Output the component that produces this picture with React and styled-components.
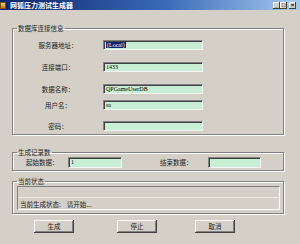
import React from 'react';
import styled, { createGlobalStyle } from 'styled-components';

const GlobalStyle = createGlobalStyle`
  html, body { margin: 0; padding: 0; background: #d4d0c8; }
  body { font-family: "Noto Sans CJK SC", "Liberation Sans", sans-serif; }
`;

const Window = styled.div`
  width: 300px;
  height: 244px;
  background: #d4d0c8;
  overflow: hidden;
  box-sizing: border-box;
`;

const TitleBar = styled.div`
  height: 10px;
  display: flex;
  align-items: center;
  background: linear-gradient(90deg, #0a246a 0%, #3a6ab8 55%, #a6caf0 100%);
  padding-right: 4px;
`;

const AppIcon = styled.div`
  width: 6px;
  height: 7px;
  margin-right: 4px;
  background: linear-gradient(180deg, #f7d36a, #c07a1c);
  border: 1px solid #7a5010;
  box-sizing: border-box;
`;

const Title = styled.span`
  flex: 1;
  color: #fff;
  font-weight: bold;
  font-size: 7px;
  line-height: 10px;
`;

const CaptionButton = styled.div`
  width: 7px;
  height: 7px;
  margin-left: ${(p) => p.$ml || 0}px;
  background: #d4d0c8;
  box-shadow: inset -1px -1px #404040, inset 1px 1px #fff;
  font-size: 6px;
  line-height: 7px;
  text-align: center;
  color: #000;
  font-family: "Liberation Sans", sans-serif;
  font-weight: bold;
`;

const Group = styled.fieldset`
  box-sizing: border-box;
  width: 272px;
  margin: ${(p) => p.$mt}px 0 0 12px;
  padding: 0 0 ${(p) => p.$pb}px 0;
  border: 1px solid #808080;
  box-shadow: 1px 1px 0 #fff, inset 1px 1px 0 #fff;
  min-inline-size: 0;
`;

const Legend = styled.legend`
  margin-left: 4px;
  padding: 0 1px;
  font-size: 6.5px;
  line-height: 8px;
  color: #1a1a1a;
`;

const Row = styled.div`
  display: flex;
  align-items: center;
  height: 10px;
  margin-top: ${(p) => p.$mt}px;
`;

const Label = styled.span`
  width: 90px;
  text-align: center;
  font-size: 6.5px;
  line-height: 10px;
  color: #1a1a1a;
  white-space: nowrap;
`;

const Field = styled.div`
  box-sizing: border-box;
  width: ${(p) => p.$w}px;
  height: ${(p) => p.$h || 10}px;
  margin-left: ${(p) => p.$ml || 0}px;
  background: #c8efd6;
  border-top: 1px solid #808080;
  border-left: 1px solid #808080;
  border-right: 1px solid #f4f4f4;
  border-bottom: 1px solid #f4f4f4;
  box-shadow: inset 1px 1px #404040;
  font-family: "Liberation Serif", serif;
  font-size: 6px;
  line-height: 8px;
  padding-left: 2px;
  color: #000;
  white-space: nowrap;
  overflow: hidden;
`;

const Selected = styled.span`
  background: #0a246a;
  color: #fff;
  padding: 0 1px;
`;

const CountLabel = styled.span`
  width: ${(p) => p.$w}px;
  margin-left: ${(p) => p.$ml}px;
  font-size: 6.5px;
  line-height: 10px;
  color: #1a1a1a;
  white-space: nowrap;
`;

const StatusPanel = styled.div`
  margin: 1px 3px 0 4px;
  border-top: 1px solid #808080;
  border-left: 1px solid #808080;
  border-right: 1px solid #fff;
  border-bottom: 1px solid #fff;
`;

const ProgressArea = styled.div`
  height: 10px;
  border-bottom: 1px solid #ece9e4;
`;

const StatusRow = styled.div`
  display: flex;
  height: 11px;
  align-items: center;
  padding-left: 2px;
  font-size: 6.5px;
  color: #1a1a1a;
  white-space: nowrap;
`;

const StatusValue = styled.span`
  margin-left: 6px;
`;

const ButtonRow = styled.div`
  display: flex;
  margin-top: 6px;
  padding-left: 34px;
`;

const Button = styled.button`
  box-sizing: border-box;
  width: 40px;
  height: 13px;
  margin: 0 0 0 ${(p) => p.$ml || 0}px;
  padding: 0;
  background: #d4d0c8;
  border: none;
  box-shadow: inset -1px -1px #404040, inset 1px 1px #fff, inset -2px -2px #808080;
  font-family: "Noto Sans CJK SC", sans-serif;
  font-size: 6.5px;
  line-height: 13px;
  color: #1a1a1a;
`;

const connectionRows = [
  { label: '服务器地址：', value: '(Local)', selected: true, mt: 8 },
  { label: '连接端口：', value: '1433', mt: 12 },
  { label: '数据名称：', value: 'QPGameUserDB', mt: 12 },
  { label: '用户名：', value: 'sa', mt: 6 },
  { label: '密码：', value: '', mt: 11 },
];

export default function App() {
  return (
    <>
      <GlobalStyle />
      <Window>
        <TitleBar>
          <AppIcon />
          <Title>网狐压力测试生成器</Title>
          <CaptionButton>_</CaptionButton>
          <CaptionButton>□</CaptionButton>
          <CaptionButton $ml={2}>×</CaptionButton>
        </TitleBar>

        <Group $mt={14} $pb={3}>
          <Legend>数据库连接信息</Legend>
          {connectionRows.map((r) => (
            <Row key={r.label} $mt={r.mt}>
              <Label>{r.label}</Label>
              <Field $w={100}>
                {r.selected ? <Selected>{r.value}</Selected> : r.value}
              </Field>
            </Row>
          ))}
        </Group>

        <Group $mt={13} $pb={3}>
          <Legend>生成记录数</Legend>
          <Row $mt={1}>
            <CountLabel $w={32} $ml={13}>起始数据：</CountLabel>
            <Field $w={54} $ml={10} $h={11}>1</Field>
            <CountLabel $w={34} $ml={38}>结束数据：</CountLabel>
            <Field $w={53} $ml={14} $h={11} />
          </Row>
        </Group>

        <Group $mt={6} $pb={3}>
          <Legend>当前状态</Legend>
          <StatusPanel>
            <ProgressArea />
            <StatusRow>
              当前生成状态:<StatusValue>请开始...</StatusValue>
            </StatusRow>
          </StatusPanel>
        </Group>

        <ButtonRow>
          <Button>生成</Button>
          <Button $ml={43}>停止</Button>
          <Button $ml={38}>取消</Button>
        </ButtonRow>
      </Window>
    </>
  );
}
